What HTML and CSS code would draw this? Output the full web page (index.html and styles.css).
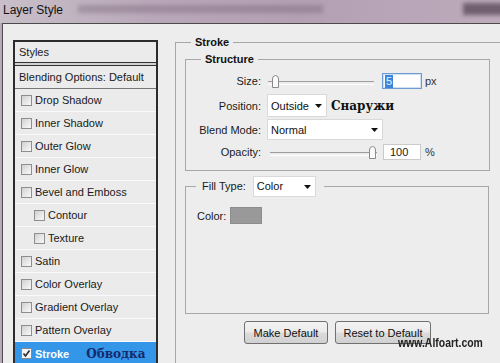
FILE: index.html
```html
<!DOCTYPE html>
<html>
<head>
<meta charset="utf-8">
<link rel="stylesheet" href="styles.css">
</head>
<body>
<div class="titlebar">
  <span class="title">Layer Style</span>
  <span class="smudge"></span>
  <span class="smudge-dark"></span>
</div>
<div class="dialog">
  <div class="list">
    <div class="row header">Styles</div>
    <div class="sep"></div>
    <div class="row blend">Blending Options: Default</div>
    <div class="row item"><span class="cb"></span>Drop Shadow</div>
    <div class="row item"><span class="cb"></span>Inner Shadow</div>
    <div class="row item"><span class="cb"></span>Outer Glow</div>
    <div class="row item"><span class="cb"></span>Inner Glow</div>
    <div class="row item"><span class="cb"></span>Bevel and Emboss</div>
    <div class="row item sub"><span class="cb"></span>Contour</div>
    <div class="row item sub"><span class="cb"></span>Texture</div>
    <div class="row item"><span class="cb"></span>Satin</div>
    <div class="row item"><span class="cb"></span>Color Overlay</div>
    <div class="row item"><span class="cb"></span>Gradient Overlay</div>
    <div class="row item"><span class="cb"></span>Pattern Overlay</div>
    <div class="row item selected">
      <svg class="cbk" width="11" height="11" viewBox="0 0 11 11"><rect x="0.5" y="0.5" width="10" height="10" fill="#f4f4f4" stroke="#8a8a8a"/><path d="M2.5 5.5 L4.5 8 L8.5 2.5" fill="none" stroke="#2a2a2a" stroke-width="1.6"/></svg>
      <span class="sel-label">Stroke</span>
      <span class="ru ru-row">Обводка</span>
    </div>
  </div>

  <div class="panel">
    <fieldset class="stroke">
      <legend>Stroke</legend>
      <fieldset class="structure">
        <legend>Structure</legend>
        <div class="frow r-size">
          <label>Size:</label>
          <div class="slider s-size">
            <svg class="thumb" width="9" height="13" viewBox="0 0 9 13"><path d="M1.5 12.5 V4 Q1.5 0.5 4.5 0.5 Q7.5 0.5 7.5 4 V12.5 Z" fill="#fafafa" stroke="#8a8a8a"/></svg>
          </div>
          <div class="num focus"><span class="hl">5</span></div>
          <span class="unit">px</span>
        </div>
        <div class="frow r-pos">
          <label>Position:</label>
          <div class="select sel-pos"><span>Outside</span><svg width="7" height="4" viewBox="0 0 7 4"><path d="M0 0 H7 L3.5 4 Z" fill="#111"/></svg></div>
          <span class="ru ru-pos">Снаружи</span>
        </div>
        <div class="frow r-blend">
          <label>Blend Mode:</label>
          <div class="select sel-blend"><span>Normal</span><svg width="7" height="4" viewBox="0 0 7 4"><path d="M0 0 H7 L3.5 4 Z" fill="#111"/></svg></div>
        </div>
        <div class="frow r-opac">
          <label>Opacity:</label>
          <div class="slider s-opac">
            <svg class="thumb" width="9" height="13" viewBox="0 0 9 13"><path d="M1.5 12.5 V4 Q1.5 0.5 4.5 0.5 Q7.5 0.5 7.5 4 V12.5 Z" fill="#fafafa" stroke="#8a8a8a"/></svg>
          </div>
          <div class="num plain">100</div>
          <span class="unit pct">%</span>
        </div>
      </fieldset>

      <fieldset class="fill">
        <legend><span class="ft">Fill Type:</span><span class="select sel-color"><span>Color</span><svg width="7" height="4" viewBox="0 0 7 4"><path d="M0 0 H7 L3.5 4 Z" fill="#111"/></svg></span></legend>
        <div class="fill-body">
          <div class="color-row"><span>Color:</span><span class="swatch"></span></div>
        </div>
      </fieldset>

      <div class="buttons">
        <button class="btn b-make">Make Default</button>
        <button class="btn b-reset">Reset to Default</button>
      </div>
    </fieldset>
  </div>
</div>
<div class="watermark">www.Alfoart.com</div>
</body>
</html>
```

FILE: styles.css
```css
* { box-sizing: border-box; }

html, body {
  margin: 0;
  width: 500px;
  height: 363px;
  overflow: hidden;
  background: #b8a8b8;
}

body {
  position: relative;
  font-family: "Liberation Sans", Arial, sans-serif;
  font-size: 11px;
  color: #1a1a1a;
}

.titlebar {
  position: relative;
  height: 23px;
  padding-left: 3px;
  background: linear-gradient(to right, #c8bfc8 0%, #b9a8b9 30%, #b3a0b3 60%, #bdabbc 100%);
  overflow: hidden;
}

.title {
  position: relative;
  z-index: 1;
  font-size: 12px;
  line-height: 20px;
  color: #111;
}

.smudge {
  position: absolute;
  left: 78px;
  top: 5px;
  width: 245px;
  height: 8px;
  background: rgba(110, 90, 110, 0.35);
  filter: blur(2px);
}

.smudge-dark {
  position: absolute;
  left: 463px;
  top: 3px;
  width: 45px;
  height: 12px;
  background: rgba(70, 55, 70, 0.65);
  filter: blur(2px);
}

.dialog {
  display: flex;
  align-items: flex-start;
  height: 340px;
  margin-left: 2px;
  padding: 12px 0 0 10px;
  border-top: 1px solid #4b4b4b;
  border-left: 1px solid #4b4b4b;
  background: #ededed;
}

/* ---------- left list ---------- */
.list {
  flex: none;
  width: 145px;
  height: 330px;
  margin-top: 4px;
  border: 2px solid #2c2c2c;
  border-bottom: none;
  background: #ebebeb;
}

.row {
  display: flex;
  align-items: center;
  white-space: nowrap;
}

.header {
  height: 21px;
  padding-left: 4px;
  border-bottom: 1px solid #333;
}

.sep {
  height: 2px;
  background: #d2d2d2;
}

.blend {
  height: 24px;
  padding-left: 4px;
  border-top: 1px solid #333;
  border-bottom: 1px solid #777;
}

.item {
  height: 23px;
  padding-left: 6px;
  border-bottom: 1px solid #fafafa;
}

.item.sub { padding-left: 19px; }

.cb {
  flex: none;
  width: 11px;
  height: 11px;
  margin-right: 3px;
  border: 1px solid #8e8e8e;
  background: linear-gradient(135deg, #cfcfcf 0%, #e8e8e8 55%, #f8f8f8 100%);
}

.selected {
  background: #3496e8;
  color: #fff;
  border-bottom: none;
}

.cbk { flex: none; margin-right: 3px; }

.sel-label { font-weight: bold; }

.ru {
  font-family: "DejaVu Serif", "Liberation Serif", serif;
  font-weight: bold;
  font-size: 12px;
}

.ru-row {
  margin-left: 17px;
  color: #16296a;
}

/* ---------- right panel ---------- */
.panel {
  flex: none;
  margin-left: 17px;
}

fieldset {
  margin: 0;
  min-inline-size: 0;
  border: 1px solid #a7a7a7;
}

legend {
  font-weight: bold;
  line-height: 13px;
  padding: 0 4px;
  color: #111;
}

.stroke {
  width: 340px;
  height: 340px;
  padding: 4px 0 0 9px;
}

.stroke > legend { margin-left: 6px; }

.structure {
  width: 305px;
  padding: 5px 0 9px 0;
}

.structure > legend { margin-left: 15px; }

.frow {
  display: flex;
  align-items: center;
}

.frow label {
  flex: none;
  width: 75px;
  margin-right: 6px;
  text-align: right;
  color: #1a1a1a;
}

.r-size { height: 20px; }
.r-pos { height: 23px; margin-top: 3px; }
.r-blend { height: 21px; margin-top: 2px; }
.r-opac { height: 18px; margin-top: 3px; }

.slider {
  position: relative;
  align-self: stretch;
  flex: none;
}

.slider::before {
  content: "";
  position: absolute;
  left: 0;
  right: 0;
  top: 50%;
  height: 2px;
  border-top: 1px solid #9c9c9c;
  border-bottom: 1px solid #ffffff;
}

.thumb {
  position: absolute;
  top: 50%;
  margin-top: -6px;
}

.s-size { width: 106px; margin-left: 1px; }
.s-size .thumb { left: 3px; }

.s-opac { width: 107px; margin-left: 3px; }
.s-opac .thumb { left: 98px; }

.num {
  flex: none;
  height: 16px;
  display: flex;
  align-items: center;
  background: #fff;
  border: 1px solid #cacaca;
}

.num.focus {
  width: 40px;
  margin-left: 8px;
  padding-left: 2px;
  border-color: #6f9ad4;
  box-shadow: inset 0 0 0 1px #cfe0f5;
}

.hl {
  display: inline-block;
  padding: 0 1px;
  line-height: 13px;
  background: #3b86dc;
  color: #e8f0ff;
}

.num.plain {
  width: 38px;
  margin-left: 6px;
  padding-left: 6px;
}

.unit { margin-left: 3px; color: #333; }
.unit.pct { margin-left: 4px; }

.select {
  flex: none;
  display: flex;
  align-items: center;
  justify-content: space-between;
  background: #fff;
  border: 1px solid #d9d9d9;
  padding: 0 4px 0 3px;
  color: #111;
  font-weight: normal;
}

.sel-pos { width: 60px; height: 23px; }
.sel-blend { width: 116px; height: 21px; }

.ru-pos {
  margin-left: 4px;
  color: #111;
}

.fill {
  width: 304px;
  margin-top: 5px;
  padding: 10px 0 0 10px;
}

.fill > legend {
  padding: 0 8px 0 6px;
  line-height: 21px;
  font-weight: normal;
}

.ft {
  display: inline-block;
  vertical-align: top;
  margin-right: 7px;
  color: #1a1a1a;
}

.sel-color {
  display: inline-flex;
  vertical-align: top;
  width: 63px;
  height: 21px;
}

.fill-body { height: 106px; }

.color-row {
  display: flex;
  align-items: center;
  height: 17px;
  padding-left: 1px;
}

.swatch {
  width: 32px;
  height: 17px;
  margin-left: 4px;
  background: #999999;
  border: 1px solid #8d8d8d;
}

.buttons {
  display: flex;
  justify-content: center;
  gap: 7px;
  width: 305px;
  margin-top: 7px;
}

.btn {
  height: 23px;
  padding: 0;
  border: 1px solid #707070;
  border-radius: 3px;
  background: linear-gradient(#f3f3f3 0%, #ebebeb 48%, #dcdcdc 52%, #d0d0d0 100%);
  font-family: "Liberation Sans", Arial, sans-serif;
  font-size: 11px;
  color: #111;
}

.b-make { width: 84px; }
.b-reset { width: 96px; }

.watermark {
  position: absolute;
  left: 398px;
  top: 336px;
  font-size: 12px;
  font-weight: bold;
  line-height: 14px;
  color: #222;
  white-space: nowrap;
  transform: scaleX(0.87);
  transform-origin: left center;
}
```
